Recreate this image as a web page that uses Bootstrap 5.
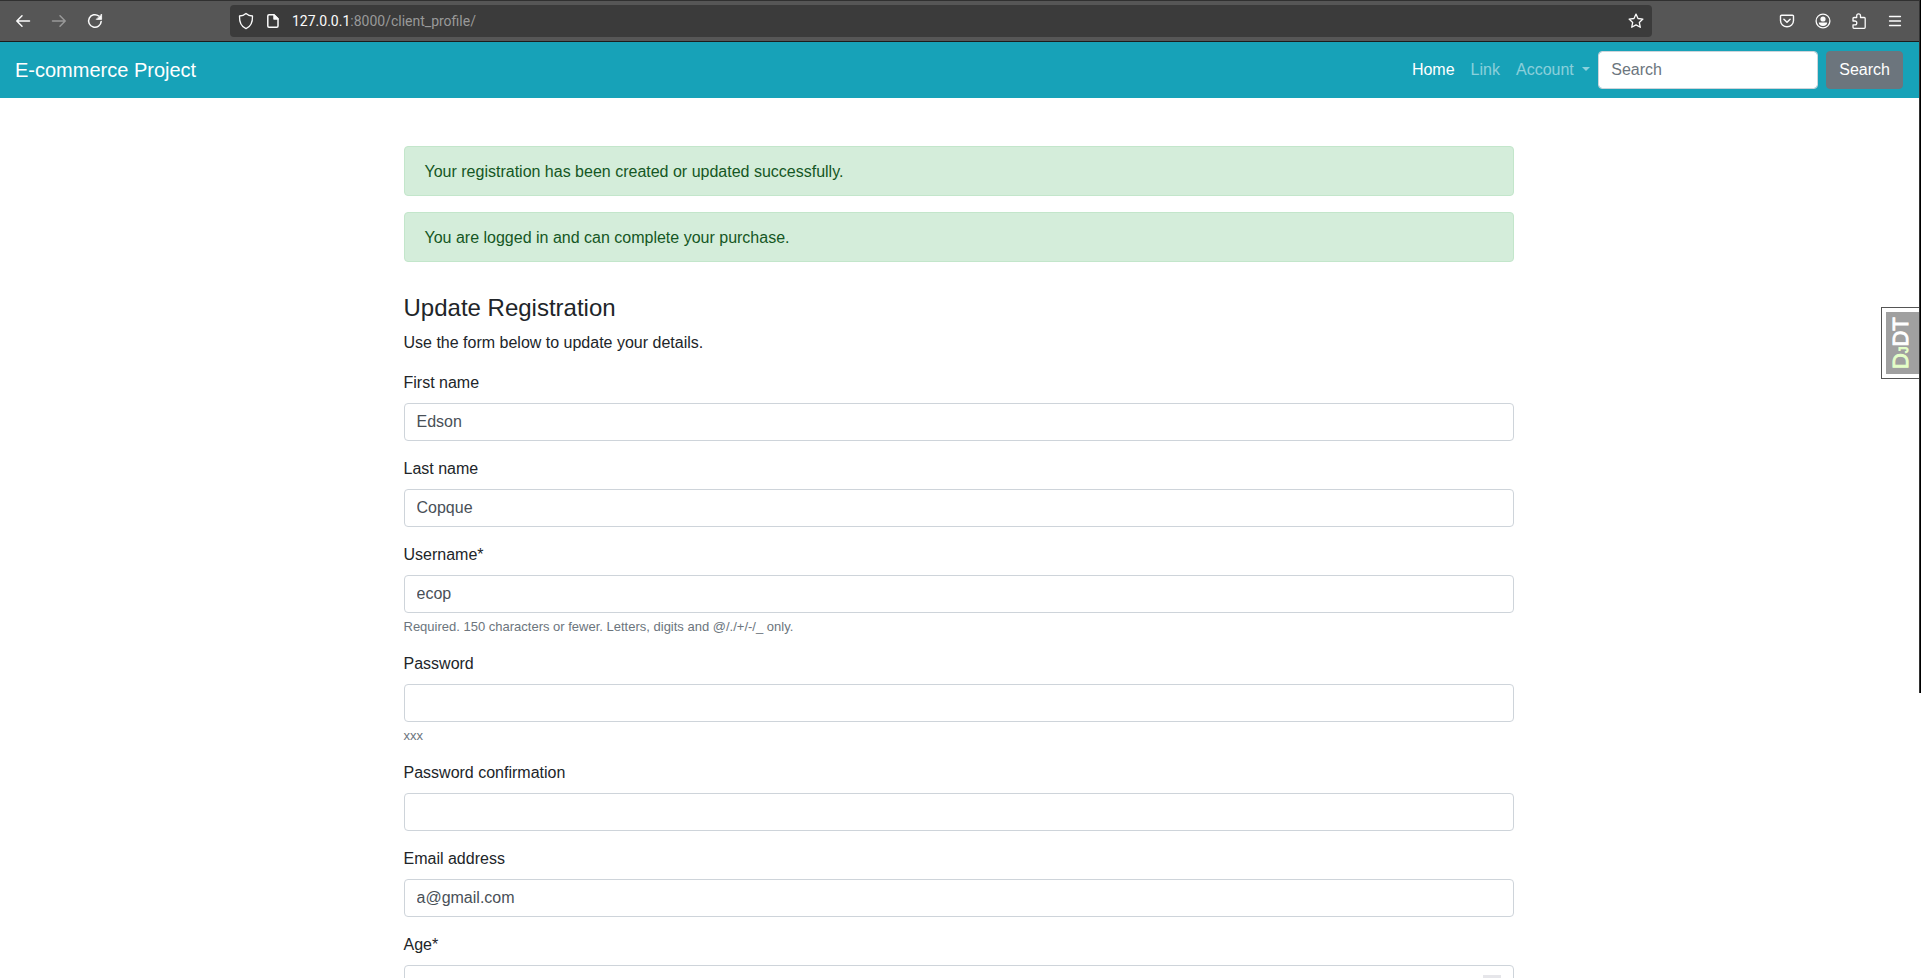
<!DOCTYPE html>
<html lang="en">
<head>
<meta charset="utf-8">
<meta name="viewport" content="width=device-width, initial-scale=1">
<title>E-commerce Project</title>
<link href="https://cdn.jsdelivr.net/npm/bootstrap@5.3.0/dist/css/bootstrap.min.css" rel="stylesheet">
<style>
  body { font-family: "Liberation Sans", Arial, sans-serif; color: #212529; padding-right: 2px; }
  .screen-edge { position: absolute; top: 0; right: 0; width: 2px; height: 693px; background: #000; border-left: 1px solid #333; }

  /* Browser toolbar */
  .browser-bar { height: 42px; background: #565656; border-top: 1px solid #303030; border-bottom: 1px solid #1c1c1c; padding: 0 6px 0 5px; color: #fbfbfb; }
  .tool-btn { width: 36px; height: 32px; padding: 0; border: 0; background: none; color: inherit; display: flex; align-items: center; justify-content: center; }
  .tool-btn:disabled { color: #999; }
  .address { height: 32px; margin: 0 117px; background: #3b3b3b; border-radius: 4px; padding: 0 8px; gap: 13px; min-width: 0; }
  .address .url { font-family: Roboto, sans-serif; font-size: 14px; line-height: 20px; color: #999; }
  .address .url b { font-weight: 400; color: #fbfbfb; }
  svg { display: block; fill: none; stroke: currentColor; stroke-width: 1.5; stroke-linecap: round; stroke-linejoin: round; }

  /* Site navigation */
  .site-nav { background: #17a2b8; padding: 8px 16px 8px 15px; min-height: 56px; --bs-navbar-color: rgba(255,255,255,.5); --bs-navbar-active-color: #fff; --bs-navbar-hover-color: rgba(255,255,255,.75); }
  .site-nav .navbar-brand, .site-nav .navbar-brand:hover { color: #fff; padding: 5px 0; }
  .form-control { border: 1px solid #ced4da; border-radius: 4px; color: #495057; height: 38px; }
  .form-control::placeholder { color: #6c757d; }
  .search-box { width: 220px; }
  .search-btn { border-radius: 4px; }

  /* Profile form */
  .page-body { max-width: 1140px; padding: 48px 16px 0 14px; }
  .alert-success { background: #d4edda; border-color: #c3e6cb; color: #155724; padding: 13px 20px 11px; border-radius: 4px; }
  .page-title { font-size: 24px; line-height: 28px; font-weight: 500; margin-bottom: 9px; }
  .form-text { font-size: 13px; line-height: 19px; color: #6c757d; }
  .spin { position: absolute; top: 10px; right: 13px; width: 18px; height: 18px; background: #e6e6ea; }

  /* Debug toolbar handle */
  .debug-handle { position: absolute; top: 307px; right: 2px; width: 38px; height: 72px; padding: 4px 0 4px 4px; background: #fff; border: 1px solid #555; border-right: 0; }
  .debug-handle a { width: 100%; height: 100%; background: #a0a0a0; color: #fff; font-size: 22px; line-height: 30px; -webkit-text-stroke: 1px; writing-mode: vertical-rl; text-orientation: sideways; transform: rotate(180deg); text-decoration: none; display: flex; align-items: center; justify-content: center; }
  .debug-handle .dj { color: #e4ffc8; }
  .debug-handle .dj span { font-size: 13px; }
</style>
</head>
<body class="vh-100 overflow-hidden position-relative">
<header class="browser-bar d-flex align-items-center">
  <button class="tool-btn" aria-label="Back"><svg width="16" height="16" viewBox="0 0 16 16"><path d="M14.5 8H2M7 2.8 1.8 8 7 13.2"/></svg></button>
  <button class="tool-btn" aria-label="Forward" disabled><svg width="16" height="16" viewBox="0 0 16 16"><path d="M1.5 8H14M9 2.8 14.2 8 9 13.2"/></svg></button>
  <button class="tool-btn" aria-label="Reload"><svg width="16" height="16" viewBox="0 0 16 16"><path d="M14.2 8.4A6.3 6.3 0 1 1 11.8 3"/><path d="M14.6 1.4v5h-5z" fill="currentColor" stroke-width=".8"/></svg></button>
  <div class="address d-flex align-items-center flex-grow-1">
    <svg width="16" height="18" viewBox="0 0 16 18"><path d="M8 1.4C9.5 2.7 12 3.8 14.5 4c.2 5.5-1.300 10.500-6.500 12.600C2.800 14.500 1.300 9.500 1.500 4 4 3.800 6.500 2.700 8 1.400z" stroke-width="1.300"/></svg>
    <svg width="12" height="16" viewBox="0 0 12 16"><path d="M2 1.800h5l4 4V13a1.200 1.200 0 0 1-1.200 1.200H2A1.200 1.200 0 0 1 .8 13V3A1.200 1.200 0 0 1 2 1.800z"/><path d="M7 2v4h4z" fill="currentColor"/></svg>
    <span class="url flex-grow-1"><b>127.0.0.1</b>:8000/client_profile/</span>
    <button class="tool-btn w-auto" aria-label="Bookmark"><svg width="16" height="16" viewBox="0 0 16 16"><path d="m8 1.100 2 4.400 4.900.6-3.600 3.300 1 4.900L8 11.900l-4.300 2.400 1-4.900L1.100 6.100 6 5.500z" stroke-width="1.300"/></svg></button>
  </div>
  <button class="tool-btn" aria-label="Save to Pocket"><svg width="16" height="16" viewBox="0 0 16 16"><path d="M2.600 2.200h10.800a1.100 1.100 0 0 1 1.100 1.100V7.500a6.500 6.300 0 0 1-13 0V3.300a1.100 1.100 0 0 1 1.100-1.100z" stroke-width="1.400"/><path d="M4.900 6.300 8 9.300l3.100-3"/></svg></button>
  <button class="tool-btn" aria-label="Account"><svg width="16" height="16" viewBox="0 0 16 16"><circle cx="8" cy="8" r="6.900" stroke-width="1.300"/><circle cx="8" cy="6" r="2.600" fill="currentColor" stroke="none"/><path d="M3.800 9.600h8.400c0 2-1.700 3.400-4.200 3.400s-4.200-1.400-4.200-3.400z" fill="currentColor" stroke="none"/></svg></button>
  <button class="tool-btn" aria-label="Extensions"><svg width="16" height="16" viewBox="0 0 16 16"><path d="M2 8V5.500a1 1 0 0 1 1-1h2.700V2.700a1.900 1.900 0 0 1 3.800 0v1.800h3.700a1 1 0 0 1 1 1v8.800a1 1 0 0 1-1 1H3a1 1 0 0 1-1-1V11.800h1.900a1.900 1.900 0 0 0 0-3.800z" stroke-width="1.300"/></svg></button>
  <button class="tool-btn" aria-label="Menu"><svg width="16" height="16" viewBox="0 0 16 16"><path d="M2.500 3.500h11M2.500 8h11M2.500 12.500h11" stroke-width="1.300"/></svg></button>
</header>

<nav class="navbar navbar-expand site-nav">
  <a class="navbar-brand" href="#">E-commerce Project</a>
  <ul class="navbar-nav ms-auto">
    <li class="nav-item"><a class="nav-link active" href="#">Home</a></li>
    <li class="nav-item"><a class="nav-link" href="#">Link</a></li>
    <li class="nav-item dropdown"><a class="nav-link dropdown-toggle" href="#" data-bs-toggle="dropdown">Account </a></li>
  </ul>
  <form class="d-flex gap-2">
    <input class="form-control search-box" type="search" placeholder="Search" aria-label="Search">
    <button class="btn btn-secondary search-btn" type="button">Search</button>
  </form>
</nav>

<main class="container page-body">
  <div class="alert alert-success mb-3" role="alert">Your registration has been created or updated successfully.</div>
  <div class="alert alert-success mb-3" role="alert">You are logged in and can complete your purchase.</div>
  <h1 class="page-title mt-3 pt-3">Update Registration</h1>
  <p class="mb-3">Use the form below to update your details.</p>
  <form>
    <div class="mb-3"><label class="form-label" for="first">First name</label><input class="form-control" id="first" type="text" value="Edson"></div>
    <div class="mb-3"><label class="form-label" for="last">Last name</label><input class="form-control" id="last" type="text" value="Copque"></div>
    <div class="mb-3"><label class="form-label" for="user">Username*</label><input class="form-control" id="user" type="text" value="ecop"><div class="form-text">Required. 150 characters or fewer. Letters, digits and @/./+/-/_ only.</div></div>
    <div class="mb-3"><label class="form-label" for="pass">Password</label><input class="form-control" id="pass" type="password"><div class="form-text">xxx</div></div>
    <div class="mb-3"><label class="form-label" for="pass2">Password confirmation</label><input class="form-control" id="pass2" type="password"></div>
    <div class="mb-3"><label class="form-label" for="email">Email address</label><input class="form-control" id="email" type="email" value="a@gmail.com"></div>
    <div class="mb-3"><label class="form-label" for="age">Age*</label><div class="position-relative"><input class="form-control" id="age" type="number"><span class="spin"></span></div></div>
  </form>
</main>

<aside class="debug-handle"><a href="#"><span><span class="dj">D<span>J</span></span>DT</span></a></aside>
<div class="screen-edge"></div>
<script src="https://cdn.jsdelivr.net/npm/bootstrap@5.3.0/dist/js/bootstrap.bundle.min.js"></script>
</body>
</html>
